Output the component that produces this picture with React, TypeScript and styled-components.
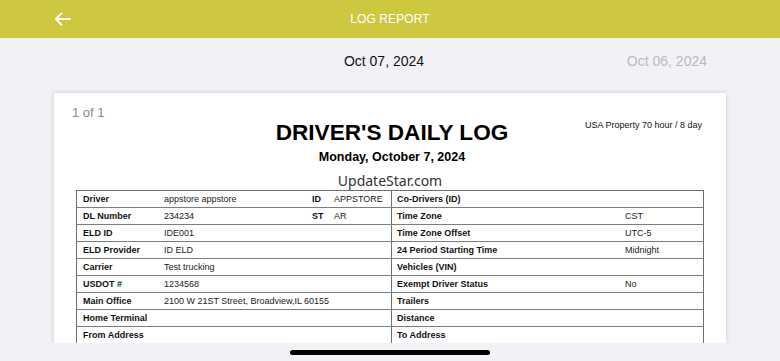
import styled, { createGlobalStyle } from "styled-components";

const GlobalStyle = createGlobalStyle`
  html, body {
    margin: 0;
    padding: 0;
    background: #f2f2f6;
  }
  body {
    font-family: "Liberation Sans", Arial, sans-serif;
  }
`;

const Screen = styled.div`
  width: 780px;
  height: 361px;
  display: flex;
  flex-direction: column;
  background: #f2f2f6;
  overflow: hidden;
`;

const TopBar = styled.header`
  height: 38px;
  flex: none;
  display: grid;
  grid-template-columns: 1fr auto 1fr;
  align-items: center;
  background: #cdc83f;
  color: #fff;
`;

const BackButton = styled.button`
  justify-self: start;
  margin-left: 54px;
  padding: 0;
  border: none;
  background: none;
  display: flex;
  color: #fff;
`;

const TopTitle = styled.h1`
  margin: 0;
  font-size: 12px;
  font-weight: 400;
  letter-spacing: 0.1px;
`;

const Body = styled.main`
  flex: 1;
  min-height: 0;
  overflow: hidden;
  display: flex;
  flex-direction: column;
`;

const DateBar = styled.div`
  height: 55px;
  flex: none;
  display: grid;
  grid-template-columns: 1fr auto 1fr;
  align-items: center;
  padding: 0 12px 10px 0;
  box-sizing: border-box;
  font-size: 14px;
`;

const DateLabel = styled.span<{ $muted?: boolean }>`
  color: ${(p) => (p.$muted ? "#b9b9bd" : "#111")};
  text-align: ${(p) => (p.$muted ? "right" : "center")};
  padding-right: ${(p) => (p.$muted ? "61px" : "0")};
`;

const Paper = styled.section`
  margin: 0 54px 0 54px;
  background: #fff;
  box-shadow: 0 0 5px rgba(0, 0, 0, 0.16);
  padding: 10px 22px 0;
  flex: 1;
`;

const PaperHead = styled.div`
  display: grid;
  grid-template-columns: 1fr auto 1fr;
  align-items: start;
`;

const PageCount = styled.span`
  margin-left: -4px;
  padding-top: 2px;
  font-size: 13px;
  line-height: 15px;
  color: #8a8a8a;
`;

const TitleBlock = styled.div`
  display: flex;
  flex-direction: column;
  align-items: center;
  padding-top: 17px;
  margin-left: 4px;
`;

const Title = styled.h2`
  margin: 0;
  font-size: 22.6px;
  line-height: 26px;
  font-weight: 700;
  color: #000;
`;

const Subtitle = styled.div`
  margin-top: 3px;
  font-size: 12.5px;
  line-height: 16px;
  font-weight: 700;
  color: #000;
`;

const Watermark = styled.div`
  margin-top: 7px;
  font-family: "Noto Sans", sans-serif;
  font-size: 14px;
  line-height: 18px;
  color: #333;
  margin-right: 4px;
`;

const RuleSet = styled.span`
  justify-self: end;
  padding: 16px 2px 0 0;
  font-size: 9px;
  line-height: 12px;
  color: #111;
`;

const LogTable = styled.div`
  border: 1px solid #6f6f6f;
  border-bottom: none;
`;

const Row = styled.div`
  display: grid;
  grid-template-columns: 81px 148px 22px 63px 229px 1fr;
  height: 17px;
  border-top: 1px solid #7d7d7d;
  box-sizing: border-box;
  &:first-child {
    border-top: none;
    height: 16px;
  }
  font-size: 9px;
`;

const Cell = styled.div<{ $bold?: boolean; $divide?: boolean; $pad?: number }>`
  display: flex;
  align-items: center;
  padding-left: ${(p) => p.$pad ?? 6}px;
  font-weight: ${(p) => (p.$bold ? 700 : 400)};
  color: ${(p) => (p.$bold ? "#111" : "#222")};
  border-left: ${(p) => (p.$divide ? "1px solid #6f6f6f" : "none")};
  white-space: nowrap;
`;

const HomeStrip = styled.div`
  height: 18px;
  flex: none;
  display: flex;
  justify-content: center;
  align-items: center;
  background: #f2f2f6;
`;

const HomeIndicator = styled.div`
  width: 200px;
  height: 5px;
  margin-top: 1px;
  border-radius: 3px;
  background: #000;
`;

type Entry = {
  label: string;
  value?: string;
  subLabel?: string;
  subValue?: string;
  rightLabel: string;
  rightValue?: string;
};

const rows: Entry[] = [
  { label: "Driver", value: "appstore appstore", subLabel: "ID", subValue: "APPSTORE", rightLabel: "Co-Drivers (ID)" },
  { label: "DL Number", value: "234234", subLabel: "ST", subValue: "AR", rightLabel: "Time Zone", rightValue: "CST" },
  { label: "ELD ID", value: "IDE001", rightLabel: "Time Zone Offset", rightValue: "UTC-5" },
  { label: "ELD Provider", value: "ID ELD", rightLabel: "24 Period Starting Time", rightValue: "Midnight" },
  { label: "Carrier", value: "Test trucking", rightLabel: "Vehicles (VIN)" },
  { label: "USDOT #", value: "1234568", rightLabel: "Exempt Driver Status", rightValue: "No" },
  { label: "Main Office", value: "2100 W 21ST Street, Broadview,IL 60155", rightLabel: "Trailers" },
  { label: "Home Terminal", rightLabel: "Distance" },
  { label: "From Address", rightLabel: "To Address" },
];

export default function App() {
  return (
    <Screen>
      <GlobalStyle />
      <TopBar>
        <BackButton aria-label="Back">
          <svg width="18" height="14" viewBox="0 0 18 14" fill="none">
            <path
              d="M16 7H1.8M7.5 1.3L1.8 7l5.7 5.7"
              stroke="#fff"
              strokeWidth="1.9"
              strokeLinecap="round"
              strokeLinejoin="round"
            />
          </svg>
        </BackButton>
        <TopTitle>LOG REPORT</TopTitle>
        <span />
      </TopBar>
      <Body>
        <DateBar>
          <span />
          <DateLabel>Oct 07, 2024</DateLabel>
          <DateLabel $muted>Oct 06, 2024</DateLabel>
        </DateBar>
        <Paper>
          <PaperHead>
            <PageCount>1 of 1</PageCount>
            <TitleBlock>
              <Title>DRIVER'S DAILY LOG</Title>
              <Subtitle>Monday, October 7, 2024</Subtitle>
              <Watermark>UpdateStar.com</Watermark>
            </TitleBlock>
            <RuleSet>USA Property 70 hour / 8 day</RuleSet>
          </PaperHead>
          <LogTable>
            {rows.map((r) => (
              <Row key={r.label}>
                <Cell $bold>{r.label}</Cell>
                <Cell>{r.value}</Cell>
                <Cell $bold>{r.subLabel}</Cell>
                <Cell>{r.subValue}</Cell>
                <Cell $bold $divide $pad={5}>
                  {r.rightLabel}
                </Cell>
                <Cell $pad={5}>{r.rightValue}</Cell>
              </Row>
            ))}
          </LogTable>
        </Paper>
      </Body>
      <HomeStrip>
        <HomeIndicator />
      </HomeStrip>
    </Screen>
  );
}
